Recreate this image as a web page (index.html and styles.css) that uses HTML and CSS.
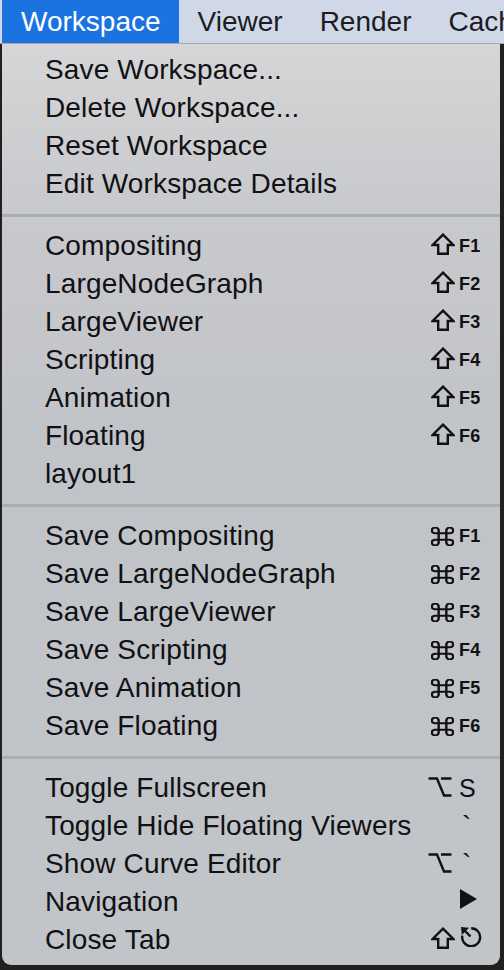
FILE: index.html
```html
<!DOCTYPE html>
<html>
<head>
<meta charset="utf-8">
<link rel="stylesheet" href="styles.css">
</head>
<body>
<div class="menubar">
  <div class="mb-item active">Workspace</div>
  <div class="mb-item">Viewer</div>
  <div class="mb-item">Render</div>
  <div class="mb-item">Cache</div>
</div>
<div class="menu">
  <div class="group">
    <div class="item"><span class="label">Save Workspace...</span></div>
    <div class="item"><span class="label">Delete Workspace...</span></div>
    <div class="item"><span class="label">Reset Workspace</span></div>
    <div class="item"><span class="label">Edit Workspace Details</span></div>
  </div>
  <div class="sep"></div>
  <div class="group">
    <div class="item"><span class="label">Compositing</span><span class="mod"><svg class="shift" viewBox="0 0 24 22"><path d="M12 1.6 L22.4 12 H16.8 V20.8 H7.2 V12 H1.6 Z" fill="none" stroke="#111" stroke-width="2.4" stroke-linejoin="miter"/></svg></span><span class="key">F1</span></div>
    <div class="item"><span class="label">LargeNodeGraph</span><span class="mod"><svg class="shift" viewBox="0 0 24 22"><path d="M12 1.6 L22.4 12 H16.8 V20.8 H7.2 V12 H1.6 Z" fill="none" stroke="#111" stroke-width="2.4"/></svg></span><span class="key">F2</span></div>
    <div class="item"><span class="label">LargeViewer</span><span class="mod"><svg class="shift" viewBox="0 0 24 22"><path d="M12 1.6 L22.4 12 H16.8 V20.8 H7.2 V12 H1.6 Z" fill="none" stroke="#111" stroke-width="2.4"/></svg></span><span class="key">F3</span></div>
    <div class="item"><span class="label">Scripting</span><span class="mod"><svg class="shift" viewBox="0 0 24 22"><path d="M12 1.6 L22.4 12 H16.8 V20.8 H7.2 V12 H1.6 Z" fill="none" stroke="#111" stroke-width="2.4"/></svg></span><span class="key">F4</span></div>
    <div class="item"><span class="label">Animation</span><span class="mod"><svg class="shift" viewBox="0 0 24 22"><path d="M12 1.6 L22.4 12 H16.8 V20.8 H7.2 V12 H1.6 Z" fill="none" stroke="#111" stroke-width="2.4"/></svg></span><span class="key">F5</span></div>
    <div class="item"><span class="label">Floating</span><span class="mod"><svg class="shift" viewBox="0 0 24 22"><path d="M12 1.6 L22.4 12 H16.8 V20.8 H7.2 V12 H1.6 Z" fill="none" stroke="#111" stroke-width="2.4"/></svg></span><span class="key">F6</span></div>
    <div class="item"><span class="label">layout1</span></div>
  </div>
  <div class="sep"></div>
  <div class="group">
    <div class="item"><span class="label">Save Compositing</span><span class="mod"><svg class="cmd" viewBox="0 0 24 24" preserveAspectRatio="none"><path d="M8 8 V4.4 A3.6 3.6 0 1 0 4.4 8 H19.6 A3.6 3.6 0 1 0 16 4.4 V19.6 A3.6 3.6 0 1 0 19.6 16 H4.4 A3.6 3.6 0 1 0 8 19.6 Z" fill="none" stroke="#111" stroke-width="2.5"/></svg></span><span class="key">F1</span></div>
    <div class="item"><span class="label">Save LargeNodeGraph</span><span class="mod"><svg class="cmd" viewBox="0 0 24 24" preserveAspectRatio="none"><path d="M8 8 V4.4 A3.6 3.6 0 1 0 4.4 8 H19.6 A3.6 3.6 0 1 0 16 4.4 V19.6 A3.6 3.6 0 1 0 19.6 16 H4.4 A3.6 3.6 0 1 0 8 19.6 Z" fill="none" stroke="#111" stroke-width="2.5"/></svg></span><span class="key">F2</span></div>
    <div class="item"><span class="label">Save LargeViewer</span><span class="mod"><svg class="cmd" viewBox="0 0 24 24" preserveAspectRatio="none"><path d="M8 8 V4.4 A3.6 3.6 0 1 0 4.4 8 H19.6 A3.6 3.6 0 1 0 16 4.4 V19.6 A3.6 3.6 0 1 0 19.6 16 H4.4 A3.6 3.6 0 1 0 8 19.6 Z" fill="none" stroke="#111" stroke-width="2.5"/></svg></span><span class="key">F3</span></div>
    <div class="item"><span class="label">Save Scripting</span><span class="mod"><svg class="cmd" viewBox="0 0 24 24" preserveAspectRatio="none"><path d="M8 8 V4.4 A3.6 3.6 0 1 0 4.4 8 H19.6 A3.6 3.6 0 1 0 16 4.4 V19.6 A3.6 3.6 0 1 0 19.6 16 H4.4 A3.6 3.6 0 1 0 8 19.6 Z" fill="none" stroke="#111" stroke-width="2.5"/></svg></span><span class="key">F4</span></div>
    <div class="item"><span class="label">Save Animation</span><span class="mod"><svg class="cmd" viewBox="0 0 24 24" preserveAspectRatio="none"><path d="M8 8 V4.4 A3.6 3.6 0 1 0 4.4 8 H19.6 A3.6 3.6 0 1 0 16 4.4 V19.6 A3.6 3.6 0 1 0 19.6 16 H4.4 A3.6 3.6 0 1 0 8 19.6 Z" fill="none" stroke="#111" stroke-width="2.5"/></svg></span><span class="key">F5</span></div>
    <div class="item"><span class="label">Save Floating</span><span class="mod"><svg class="cmd" viewBox="0 0 24 24" preserveAspectRatio="none"><path d="M8 8 V4.4 A3.6 3.6 0 1 0 4.4 8 H19.6 A3.6 3.6 0 1 0 16 4.4 V19.6 A3.6 3.6 0 1 0 19.6 16 H4.4 A3.6 3.6 0 1 0 8 19.6 Z" fill="none" stroke="#111" stroke-width="2.5"/></svg></span><span class="key">F6</span></div>
  </div>
  <div class="sep"></div>
  <div class="group">
    <div class="item"><span class="label">Toggle Fullscreen</span><span class="mod"><svg class="opt" viewBox="0 0 24 20"><path d="M0.5 1.5 H9 L16 18.5 H23.5 M13 1.5 H23.5" fill="none" stroke="#111" stroke-width="2.4"/></svg></span><span class="key big">S</span></div>
    <div class="item"><span class="label">Toggle Hide Floating Viewers</span><span class="mod"></span><span class="key tick">`</span></div>
    <div class="item"><span class="label">Show Curve Editor</span><span class="mod"><svg class="opt" viewBox="0 0 24 20"><path d="M0.5 1.5 H9 L16 18.5 H23.5 M13 1.5 H23.5" fill="none" stroke="#111" stroke-width="2.4"/></svg></span><span class="key tick">`</span></div>
    <div class="item"><span class="label">Navigation</span><span class="mod"></span><span class="key"><svg class="tri" viewBox="0 0 17 20"><path d="M0 0 L17 10 L0 20 Z" fill="#111"/></svg></span></div>
    <div class="item"><span class="label">Close Tab</span><span class="mod"><svg class="shift" viewBox="0 0 24 22"><path d="M12 1.6 L22.4 12 H16.8 V20.8 H7.2 V12 H1.6 Z" fill="none" stroke="#111" stroke-width="2.4"/></svg></span><span class="key"><svg class="esc" viewBox="0 0 24 22"><path d="M12.2 3.2 A9 9 0 1 1 3.3 10.6" fill="none" stroke="#111" stroke-width="2.4"/><path d="M4.5 4.5 L11.5 11.5" stroke="#111" stroke-width="2.4"/><path d="M2 2 L10 2.8 L2.8 10 Z" fill="#111"/></svg></span></div>
  </div>
</div>
</body>
</html>
```
FILE: styles.css
```css
* { box-sizing: border-box; }
html, body { margin: 0; padding: 0; }
body {
  width: 504px;
  height: 970px;
  background: #202021;
  overflow: hidden;
  font-family: "Liberation Sans", Arial, sans-serif;
  color: #111114;
}
.menubar {
  height: 44px;
  background: #d0d8e7;
  border-bottom: 1px solid #a3a9b4;
  display: flex;
  align-items: stretch;
  padding-left: 2px;
  white-space: nowrap;
  overflow: hidden;
}
.mb-item {
  font-size: 28px;
  padding: 0 18px 0 19px;
  display: flex;
  align-items: center;
  color: #1b1c24;
  flex-shrink: 0;
}
.mb-item.active {
  background: #1b73e2;
  color: #ffffff;
}
.menu {
  margin-left: 2px;
  width: 498px;
  height: 921px;
  background: linear-gradient(#d6d6d8 0px, #c9cacd 150px, #c0c3c8 400px, #c1c4c9 100%);
  border-radius: 0 0 9px 9px;
  padding: 7px 0 6px 0;
}
.item {
  height: 38px;
  line-height: 38px;
  display: grid;
  grid-template-columns: 1fr 27px 29px;
  padding: 0 14px 0 43px;
  font-size: 28px;
  letter-spacing: 0.15px;
  white-space: nowrap;
}
.label { display: block; }
.mod {
  display: block;
  height: 38px;
  line-height: 38px;
}
.key {
  display: block;
  height: 38px;
  line-height: 38px;
  font-size: 18px;
  font-weight: 700;
  letter-spacing: 0.3px;
  padding-left: 2px;
}
.shift { width: 24px; height: 22px; margin-left: 1px; vertical-align: baseline; }
.cmd { width: 23px; height: 19px; margin-left: 1px; vertical-align: -1px; }
.opt { width: 24px; height: 20px; margin-left: -2px; vertical-align: baseline; }
.key.big { font-size: 25px; font-weight: 400; letter-spacing: 0; }
.key.tick { font-size: 28px; font-weight: 400; padding-left: 5px; }
.tri { width: 17px; height: 20px; margin-left: 1px; vertical-align: -1px; }
.esc { width: 24px; height: 22px; margin-left: 0; vertical-align: -1px; }
.sep {
  height: 24px;
  display: flex;
  align-items: center;
}
.sep::before {
  content: "";
  display: block;
  width: 100%;
  height: 3px;
  background: #aaadb2;
}
```
